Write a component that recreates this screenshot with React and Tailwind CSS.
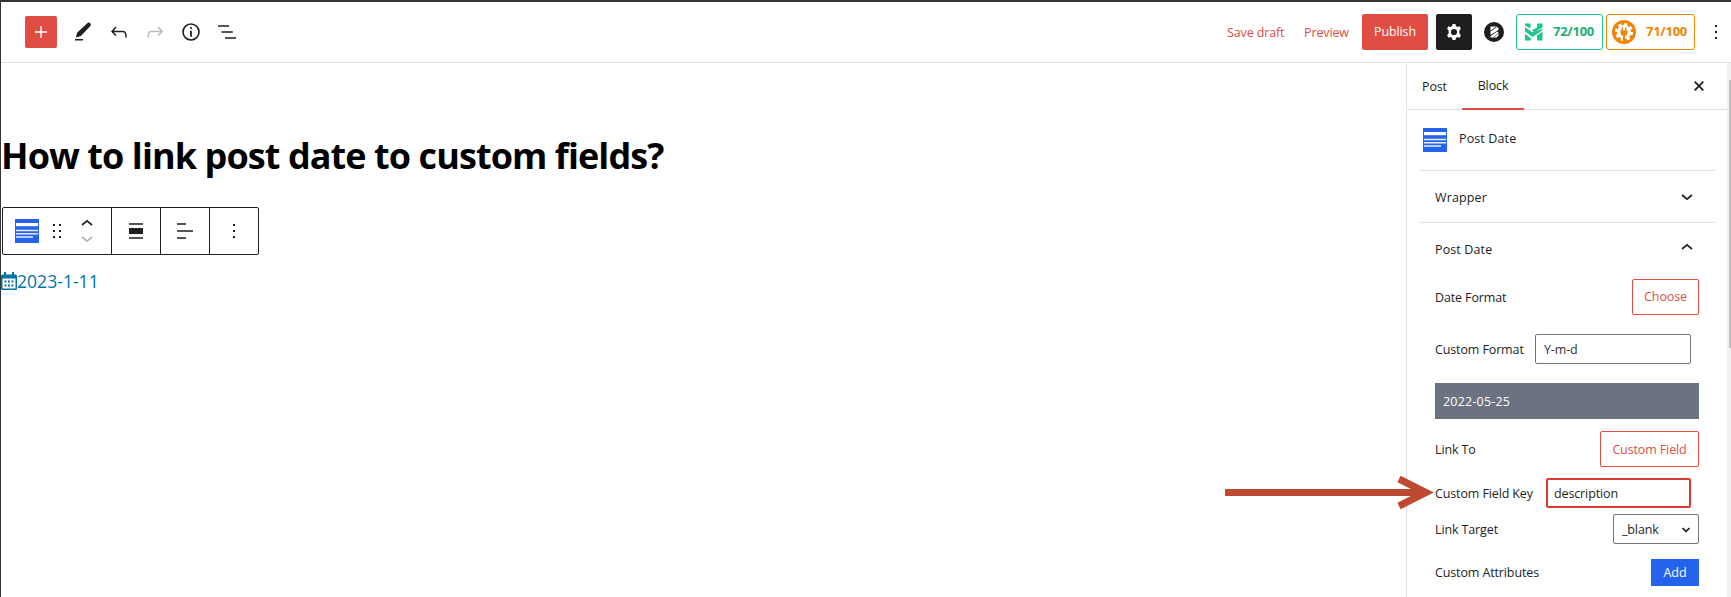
import React from "react";

const Icon = ({ className = "", size = 24, children, ...rest }) => (
  <svg width={size} height={size} viewBox="0 0 24 24" className={"shrink-0 " + className} fill="currentColor" {...rest}>
    {children}
  </svg>
);

const BlockIcon = () => (
  <svg width="24" height="24" viewBox="0 0 24 24" className="block shrink-0">
    <rect width="24" height="24" fill="#2563eb" />
    <rect x="1" y="4" width="22" height="3.2" fill="#fff" />
    <path d="M1 11.5H23M1 14.8H23M1 18H18" stroke="#fff" strokeWidth="1.5" opacity=".9" />
  </svg>
);

const Chevron = ({ up, className = "" }) => (
  <svg width="12" height="8" viewBox="0 0 12 8" className={"shrink-0 " + className} fill="none" stroke="currentColor" strokeWidth="1.7">
    {up ? <path d="M1 6L6 1.8L11 6" /> : <path d="M1 2L6 6.2L11 2" />}
  </svg>
);

function Header() {
  return (
    <header className="flex h-[61px] shrink-0 items-center border-b border-[#e0e0e0] pb-px">
      <button className="ml-[24px] flex size-8 items-center justify-center rounded-[2px] bg-[#e14d43] text-white">
        <svg width="12" height="12" viewBox="0 0 12 12" stroke="currentColor" strokeWidth="1.5">
          <path d="M6 0V12M0 6H12" />
        </svg>
      </button>
      <div className="ml-[14px] flex gap-3 text-[#1e1e1e]">
        <Icon>
          <path d="M4 19h8v1.600H4zM16.300 3.200c.9-.9 2-.8 2.900 0s1 2 .2 2.900L9.800 15.900 4.800 17.600l1.500-5z" />
        </Icon>
        <Icon>
          <path d="M18.300 11.700c-.6-.6-1.400-.9-2.300-.9H6.700l2.900-3.300-1.100-1-4.500 5L8.500 16l1-1-2.700-2.700H16c.5 0 .9.2 1.300.5 1 1 1 3.400 1 4.500v.3h1.500v-.2c0-1.500 0-4.300-1.500-5.700z" />
        </Icon>
        <Icon className="text-[#bcbcbc]">
          <path d="M15.600 6.500l-1.100 1 2.900 3.300H8c-.9 0-1.700.3-2.300.9-1.400 1.500-1.400 4.200-1.400 5.600v.2h1.500v-.3c0-1.100 0-3.500 1-4.500.3-.3.7-.5 1.300-.5h9.200L14.500 15l1.100 1.100 4.600-4.600-4.600-5z" />
        </Icon>
        <Icon>
          <circle cx="12" cy="12" r="8" fill="none" stroke="currentColor" strokeWidth="1.6" />
          <path d="M11.100 7.200h1.800v1.800h-1.800zM11.100 10.700h1.800v6h-1.800z" />
        </Icon>
        <Icon>
          <path d="M3 5h11v2H3zM6.500 11h11.300v2H6.500zM10 17h11v2H10z" opacity=".75" />
        </Icon>
      </div>
      <div className="ml-auto flex items-center text-[12.5px] text-[#e14d43]">
        <span className="w-[77px] pt-[3px] tracking-[-0.01em] whitespace-nowrap">Save draft</span>
        <span className="w-[58px] pt-[3px] tracking-[-0.01em]">Preview</span>
        <button className="flex h-9 w-[66px] items-center justify-center rounded-[2px] bg-[#e14d43] pt-[2px] tracking-[-0.01em] text-white">Publish</button>
        <button className="ml-2 flex size-9 items-center justify-center rounded-[2px] bg-[#1e1e1e] text-white">
          <svg width="16" height="16" viewBox="0 0 16 16">
            <path fill="currentColor" fillRule="evenodd" d="M6.600 0h2.800l.6 2.100 1.300.8 2.200-.6 1.400 2.500L13.400 6.400v3.200l1.500 1.600-1.400 2.500-2.200-.6-1.300.8L9.400 16H6.600L6 13.900l-1.300-.8-2.200.6-1.400-2.500L2.600 9.600V6.400L1.100 4.800l1.400-2.500 2.200.6L6 2.100zM8 4.900a3.100 3.100 0 1 0 0 6.200a3.100 3.100 0 0 0 0-6.200z" />
          </svg>
        </button>
        <svg width="20" height="20" viewBox="0 0 20 20" className="ml-3">
          <circle cx="10" cy="10" r="10" fill="#1e1e1e" />
          <path d="M6.500 4.500h6l2 1.800v1.700L6.500 13zM13.200 9.600l1.300 1.200v2.700l-2 2H6.500v-1.200z" fill="#fff" />
          <path d="M6.500 9.200L12.500 4.800" stroke="#1e1e1e" strokeWidth=".9" />
          <path d="M9.500 15.200L14 11.600" stroke="#1e1e1e" strokeWidth=".6" />
        </svg>
        <div className="ml-3 flex h-9 w-[87px] items-center rounded-[3px] border border-[#1fc085] pl-2 font-bold text-[#24ad73]">
          <svg width="18" height="18" viewBox="0 0 18 18" fill="#1fc58a">
            <path d="M0 .5h5.500v4.700L3 4.200 0 2.200z" />
            <path d="M12 .5h5.500v4.300L9.300 9 6.800 7.500 12 4.500z" />
            <path d="M0 4l7.200 5.300L17.500 6v1.200L7.500 14 0 8.500z" />
            <path d="M0 10.800l5.800 4.400v2.300H0zM12 12.300l5.500-3.500v8.700H12z" />
          </svg>
          <span className="ml-[10px] pt-px text-[13px] tracking-[-0.02em]">72/100</span>
        </div>
        <div className="ml-[3px] flex h-9 w-[89px] items-center rounded-[3px] border border-[#f18500] pl-[5px] font-bold text-[#f18500]">
          <svg width="24" height="24" viewBox="0 0 24 24">
            <circle cx="12" cy="12" r="12" fill="#f18500" />
            <circle cx="12" cy="12" r="7.200" fill="#fff" />
            <circle cx="12" cy="12" r="7.800" fill="none" stroke="#fff" strokeWidth="2.600" strokeDasharray="3.100 3.026" />
            <path d="M8.500 10.500h7v2.500a3 3 0 0 1-2.500 2.800V21h-2v-5.200A3 3 0 0 1 8.500 13zM9.500 7.500h1.500v3H9.500zM13 7.500h1.500v3H13z" fill="#f18500" />
          </svg>
          <span className="ml-[10px] pt-px text-[13px] tracking-[-0.02em]">71/100</span>
        </div>
        <svg width="2" height="14" viewBox="0 0 2 14" className="mr-[14px] ml-5" fill="#1e1e1e">
          <path d="M0 0h2v2H0zM0 6h2v2H0zM0 12h2v2H0z" />
        </svg>
      </div>
    </header>
  );
}

function BlockToolbar() {
  return (
    <div className="ml-px flex h-12 w-[257px] rounded-[2px] border border-[#1e1e1e] text-[#1e1e1e]">
      <div className="flex w-[109px] items-center border-r border-[#1e1e1e] pl-3">
        <BlockIcon />
        <svg width="8" height="14" viewBox="0 0 8 14" className="ml-[14px]" fill="currentColor">
          <path d="M0 0h2v2H0zM6 0h2v2H6zM0 6h2v2H0zM6 6h2v2H6zM0 12h2v2H0zM6 12h2v2H6z" />
        </svg>
        <div className="ml-5 flex flex-col gap-2">
          <Chevron up />
          <Chevron className="text-[#b5b5b5]" />
        </div>
      </div>
      <div className="flex w-[49px] items-center justify-center border-r border-[#1e1e1e]">
        <svg width="14" height="16" viewBox="0 0 14 16" fill="currentColor">
          <path d="M0 0h14v2H0zM0 14h14v2H0z" opacity=".75" />
          <path d="M0 5h14v6H0z" />
        </svg>
      </div>
      <div className="flex w-[49px] items-center justify-center border-r border-[#1e1e1e]">
        <svg width="16" height="16" viewBox="0 0 16 16" fill="currentColor" opacity=".75">
          <path d="M0 0h9v2H0zM0 7h16v2H0zM0 14h9v2H0z" />
        </svg>
      </div>
      <div className="flex flex-1 items-center justify-center">
        <svg width="2" height="14" viewBox="0 0 2 14" fill="currentColor">
          <path d="M0 0h2v2H0zM0 6h2v2H0zM0 12h2v2H0z" />
        </svg>
      </div>
    </div>
  );
}

function Editor() {
  return (
    <main className="min-w-0 flex-1">
      <h1 className="mt-[69px] h-12 text-[36px] leading-[48px] font-bold tracking-[-0.0255em] whitespace-nowrap text-black">
        How to link post date to custom fields?
      </h1>
      <div className="mt-[27px]">
        <BlockToolbar />
      </div>
      <div className="mt-[14px] flex h-6 items-center text-[#0073aa]">
        <svg width="16" height="18" viewBox="0 0 16 18" className="mb-px" fill="currentColor">
          <path fillRule="evenodd" d="M1.500 2.500H3V0h2v2.500h6V0h2v2.500h1.500A1.500 1.500 0 0 1 16 4v12.500a1.500 1.500 0 0 1-1.500 1.500h-13A1.500 1.500 0 0 1 0 16.500V4a1.500 1.500 0 0 1 1.500-1.500zM1.500 6.500v10h13v-10z" />
          <path d="M3.500 8.500h2v2h-2zM7 8.500h2v2H7zM10.500 8.500h2v2h-2zM3.500 12.500h2v2h-2zM7 12.500h2v2H7zM10.500 12.500h2v2h-2z" />
        </svg>
        <span className="text-[17.6px]">2023-1-11</span>
      </div>
    </main>
  );
}

const Row = ({ label, className, children }) => (
  <div className={"flex items-center justify-between " + className}>
    <span className="pt-[2px] whitespace-nowrap">{label}</span>
    {children}
  </div>
);

function Sidebar() {
  return (
    <aside className="flex w-[325px] shrink-0 border-l border-[#e0e0e0] text-[12.5px] tracking-[-0.01em] text-[#1e1e1e]">
      <div className="w-[320px]">
        <div className="flex h-[47px] items-center border-b border-[#e0e0e0]">
          <span className="w-[55px] pt-[2px] pl-[15px] font-medium">Post</span>
          <span className="flex h-[47px] w-[62px] items-center justify-center border-b-2 border-[#e14d43] pt-[3px] font-medium">Block</span>
          <svg width="10" height="10" viewBox="0 0 10 10" className="mr-[23px] ml-auto" stroke="currentColor" strokeWidth="1.800">
            <path d="M.7.7L9.300 9.300M9.300.7L.7 9.300" />
          </svg>
        </div>
        <div className="mr-3 ml-3 flex h-[61px] items-start border-b border-[#e0e0e0] pt-[18px] pl-1">
          <BlockIcon />
          <span className="mt-[2px] ml-3 font-medium tracking-[0.01em]">Post Date</span>
        </div>
        <div className="mx-3 flex h-[52px] items-center justify-between border-b border-[#e0e0e0] pr-[22px] pl-4 font-medium tracking-[0.01em]">
          <span className="pt-[3px]">Wrapper</span>
          <Chevron className="mt-px" />
        </div>
        <div className="flex h-[56px] items-center justify-between pr-[34px] pl-7 font-medium tracking-[0.01em]">
          <span className="pb-[2px]">Post Date</span>
          <Chevron up className="mb-2" />
        </div>
        <div className="pr-7 pl-7">
          <Row label="Date Format" className="h-9">
            <button className="h-9 w-[67px] rounded-[2px] border border-[#e14d43] pt-px text-[#e14d43]">Choose</button>
          </Row>
          <Row label="Custom Format" className="mt-[19px] h-[30px] pr-2">
            <div className="flex h-[30px] w-[156px] items-center rounded-[2px] border border-[#757575] pt-[3px] pl-2 text-[#2c3338]">Y-m-d</div>
          </Row>
          <div className="mt-[19px] flex h-9 items-center bg-[#6b7280] pt-[2px] pl-2 tracking-[0.015em] text-white">2022-05-25</div>
          <Row label="Link To" className="mt-3 h-9">
            <button className="h-9 w-[99px] rounded-[2px] border border-[#e14d43] pt-[2px] text-[#e14d43]">Custom Field</button>
          </Row>
          <Row label="Custom Field Key" className="mt-[11px] h-[30px] pr-2">
            <div className="flex h-[30px] w-[145px] items-center rounded-[2px] border-2 border-[#dc3a2f] pt-[2px] pl-[6px]">description</div>
          </Row>
          <Row label="Link Target" className="mt-[6px] h-[30px]">
            <div className="flex h-[30px] w-[86px] items-center justify-between rounded-[2px] border border-[#757575] pt-[2px] pr-2 pl-2">
              _blank
              <svg width="8" height="6" viewBox="0 0 8 6" fill="none" stroke="currentColor" strokeWidth="1.600">
                <path d="M.5 1L4 4.300L7.500 1" />
              </svg>
            </div>
          </Row>
          <Row label="Custom Attributes" className="mt-[15px] h-[27px]">
            <button className="h-[27px] w-12 bg-[#2563eb] pt-[2px] text-white">Add</button>
          </Row>
        </div>
      </div>
      <div className="flex flex-1 justify-end bg-[#f1f1f1] pt-[17px]">
        <div className="h-[268px] w-[2px] bg-[#c1c1c1]" />
      </div>
    </aside>
  );
}

export default function App() {
  return (
    <div className="relative flex h-[597px] w-[1731px] flex-col overflow-hidden border-t-2 border-l border-t-[#32373c] border-l-[#32373c] bg-white font-['Open_Sans',sans-serif]">
      <Header />
      <div className="flex min-h-0 flex-1">
        <Editor />
        <Sidebar />
      </div>
      <svg width="212" height="36" viewBox="0 0 212 36" className="absolute top-[473px] left-[1223px]" fill="none" stroke="#bd4930" strokeWidth="7">
        <path d="M1 17.500H200" />
        <path d="M175 4L202 17.500L175 31" />
      </svg>
    </div>
  );
}
